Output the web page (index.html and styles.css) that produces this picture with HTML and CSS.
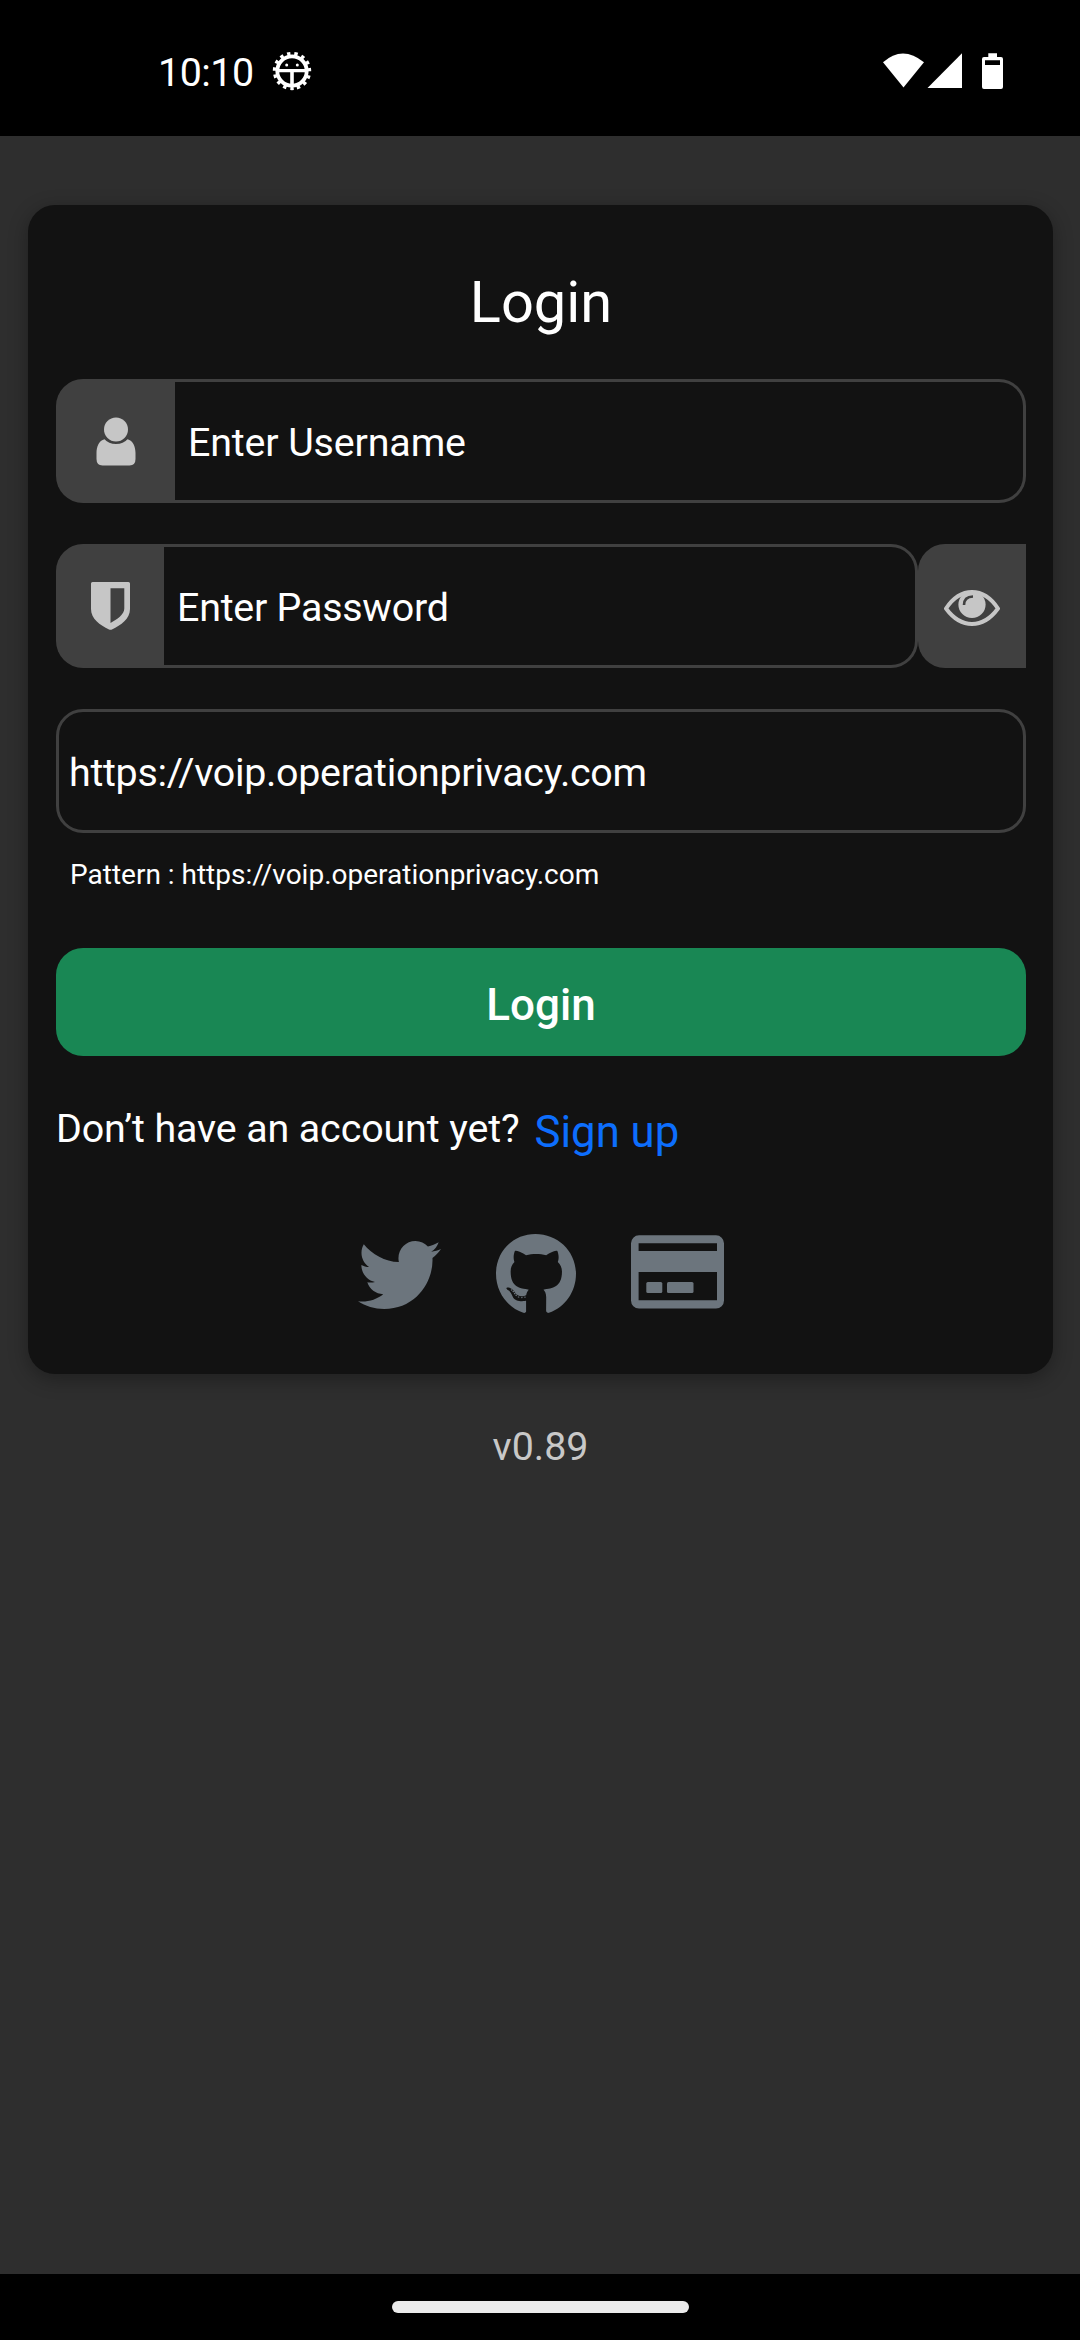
FILE: index.html
```html
<!DOCTYPE html>
<html lang="en">
<head>
<meta charset="utf-8">
<title>Login</title>
<link rel="stylesheet" href="styles.css">
</head>
<body>
<header class="status">
  <span class="clock">10:10</span>
  <svg class="bug" width="40" height="40" viewBox="-20 -20 40 40">
    <circle r="17" fill="none" stroke="#fff" stroke-width="4.400" stroke-dasharray="3.300 3.820" transform="rotate(84.500)"/>
    <circle r="14.700" fill="none" stroke="#fff" stroke-width="3.800"/>
    <path d="M-14-2H14V1.300H1.800V15H-1.800V1.300H-14z" fill="#fff"/>
    <circle cx="-5.300" cy="-6" r="1.500" fill="#fff"/><circle cx="5.300" cy="-6" r="1.500" fill="#fff"/>
  </svg>
  <svg class="signals" width="122" height="38" viewBox="882 52 122 38" fill="#fff">
    <path d="M883 62.300Q902.500 44.600 924 62.300L903.500 87.500z"/>
    <path d="M962 53.300V88H927.500z"/>
    <path fill-rule="evenodd" d="M988.300 53.300H997V57H1001a2 2 0 0 1 2 2V87a2 2 0 0 1-2 2H984a2 2 0 0 1-2-2V59a2 2 0 0 1 2-2h4.300zM985 60.300V65h15V60.300z"/>
  </svg>
</header>
<main class="page">
  <section class="card">
    <h1 class="title">Login</h1>
    <div class="field">
      <span class="addon addon-user">
        <svg width="40" height="49" viewBox="0 0 40 49" fill="#c6c6c6"><circle cx="20" cy="12.500" r="12"/><path d="M8.500 22.300Q12.500 27 20 27T31.500 22.300C37 23.500 39.500 30 39.500 36V42Q39.500 48.500 33.500 48.500H6.500Q.5 48.500 .5 42V36C.5 30 3 23.500 8.500 22.300z"/></svg>
      </span>
      <span class="input username">Enter Username</span>
    </div>
    <div class="field">
      <span class="addon addon-lock">
        <svg width="39" height="48" viewBox="0 0 39 48"><path fill="#c6c6c6" fill-rule="evenodd" d="M1.500 0H37.500Q39 0 39 1.500V27C39 37 30 43 21 47.500Q19.500 48.200 18 47.500C9 43 0 37 0 27V1.500Q0 0 1.500 0zM19.500 6.200V41C26 37.500 33.300 32.500 33.300 26.500V6.200z"/></svg>
      </span>
      <span class="input password">Enter Password</span>
      <span class="addon addon-eye">
        <svg width="56" height="36" viewBox="0 0 56 36"><path d="M2 18.500C9 8 17 2 28 2S47 8 54 18.500C47 28 39 34 28 34S9 28 2 18.500z" fill="none" stroke="#c6c6c6" stroke-width="4" stroke-linejoin="round"/><circle cx="28" cy="14.500" r="13.600" fill="#c6c6c6"/><path d="M20 15Q20 6.800 29 6.500" fill="none" stroke="#404040" stroke-width="2.600"/></svg>
      </span>
    </div>
    <div class="field"><span class="input url">https://voip.operationprivacy.com</span></div>
    <p class="hint">Pattern : https://voip.operationprivacy.com</p>
    <button class="submit">Login</button>
    <p class="signup"><span class="question">Don’t have an account yet?</span><a class="link">Sign up</a></p>
    <div class="social">
      <svg class="twitter" width="83" height="68" viewBox="0 48 512 416" preserveAspectRatio="none"><path d="M459.370 151.716c.325 4.548.325 9.097.325 13.645 0 138.720-105.583 298.558-298.558 298.558-59.452 0-114.680-17.219-161.137-47.106 8.447.974 16.568 1.299 25.340 1.299 49.055 0 94.213-16.568 130.274-44.832-46.132-.975-84.792-31.188-98.112-72.772 6.498.974 12.995 1.624 19.818 1.624 9.421 0 18.843-1.300 27.614-3.573-48.081-9.747-84.143-51.980-84.143-102.985v-1.299c13.969 7.797 30.214 12.670 47.431 13.319-28.264-18.843-46.781-51.005-46.781-87.391 0-19.492 5.197-37.360 14.294-52.954 51.655 63.675 129.300 105.258 216.365 109.807-1.624-7.797-2.599-15.918-2.599-24.040 0-57.828 46.782-104.934 104.934-104.934 30.213 0 57.502 12.670 76.670 33.137 23.715-4.548 46.456-13.320 66.599-25.340-7.798 24.366-24.366 44.833-46.132 57.827 21.117-2.273 41.584-8.122 60.426-16.243-14.292 20.791-32.161 39.308-52.628 54.253z"/></svg>
      <svg class="github" width="80" height="79" viewBox="0 8 496 484" preserveAspectRatio="none"><path d="M165.900 397.400c0 2-2.300 3.600-5.200 3.600-3.300.3-5.600-1.300-5.600-3.600 0-2 2.300-3.600 5.200-3.600 3-.3 5.600 1.300 5.600 3.600zm-31.100-4.500c-.7 2 1.300 4.300 4.300 4.900 2.600 1 5.600 0 6.200-2s-1.300-4.300-4.300-5.200c-2.600-.7-5.500.3-6.200 2.300zm44.200-1.700c-2.900.7-4.900 2.600-4.600 4.900.3 2 2.900 3.300 5.900 2.600 2.900-.7 4.900-2.600 4.600-4.600-.3-1.900-3-3.200-5.900-2.900zM244.800 8C106.100 8 0 113.300 0 252c0 110.900 69.800 205.800 169.500 239.200 12.800 2.300 17.300-5.600 17.300-12.100 0-6.200-.3-40.400-.3-61.400 0 0-70 15-84.700-29.800 0 0-11.400-29.100-27.800-36.600 0 0-22.900-15.700 1.600-15.400 0 0 24.900 2 38.600 25.800 21.900 38.600 58.600 27.500 72.900 20.900 2.300-16 8.800-27.100 16-33.700-55.900-6.200-112.300-14.300-112.300-110.500 0-27.500 7.600-41.300 23.600-58.900-2.600-6.500-11.100-33.300 2.600-67.900 20.900-6.500 69 27 69 27 20-5.600 41.500-8.500 62.800-8.500s42.800 2.900 62.800 8.500c0 0 48.100-33.600 69-27 13.700 34.700 5.200 61.400 2.600 67.900 16 17.700 25.800 31.500 25.800 58.900 0 96.500-58.900 104.200-114.800 110.500 9.200 7.900 17 22.900 17 46.400 0 33.700-.3 75.400-.3 83.600 0 6.500 4.600 14.400 17.300 12.100C428.200 457.800 496 362.900 496 252 496 113.300 383.500 8 244.800 8z"/><g><circle cx="97" cy="351" r="5"/><circle cx="107" cy="361" r="5"/><circle cx="116" cy="373" r="5"/><circle cx="125" cy="384" r="5"/></g></svg>
      <svg class="payment" width="93" height="74" viewBox="0 0 93 74"><path fill-rule="evenodd" d="M8 .3H85a8 8 0 0 1 8 8V65.500a8 8 0 0 1-8 8H8a8 8 0 0 1-8-8V8.300a8 8 0 0 1 8-8zM7.600 8.300V16H86V8.300zM7.600 37V65.300H86V37z"/><rect x="15.300" y="47" width="16" height="11" rx="1.500"/><rect x="36" y="47" width="26.500" height="11" rx="1.500"/></svg>
    </div>
  </section>
  <p class="version">v0.89</p>
</main>
<footer class="nav"><span class="pill"></span></footer>
</body>
</html>
```
FILE: styles.css
```css
* { box-sizing: border-box; }
body {
  margin: 0;
  width: 1080px;
  height: 2340px;
  display: flex;
  flex-direction: column;
  background: #2e2e2e;
  color: #fff;
  font: 39.4px/46px Roboto, sans-serif;
}
h1, p { margin: 0; font-weight: 400; }
svg { display: block; flex: none; }
.status {
  height: 136px;
  background: #000;
  display: flex;
  align-items: flex-start;
  padding: 50px 76px 0 158px;
}
.clock { width: 113.5px; letter-spacing: -.5px; }
.bug { margin-top: 1px; }
.signals { margin: 2px 0 0 auto; }
.page { flex: 1; padding: 69px 27px 0 28px; }
.card {
  height: 1169px;
  padding: 63px 27px 0 28px;
  background: #121212;
  border-radius: 27px;
  box-shadow: 0 5px 20px rgba(0, 0, 0, .32);
}
.title {
  height: 111px;
  font-size: 57.75px;
  line-height: 68px;
  text-align: center;
}
.field { display: flex; height: 124px; margin-bottom: 41px; }
.addon {
  display: flex;
  align-items: center;
  justify-content: center;
  background: #404040;
  border-radius: 27px 0 0 27px;
}
.addon-user { width: 119px; }
.addon-lock { width: 108px; padding-bottom: 1px; }
.addon-eye { width: 108px; padding-top: 4px; }
.input {
  flex: 1;
  padding: 38px 14px 0 13px;
  border: 3px solid #404040;
  border-left-width: 0;
  border-radius: 0 27px 27px 0;
  white-space: nowrap;
}
.username { letter-spacing: -.14px; }
.password { letter-spacing: -.24px; }
.url { padding-left: 10px; border-left-width: 3px; border-radius: 27px; letter-spacing: -.3px; }
.hint { height: 99px; margin-top: -25px; padding-left: 14px; font-size: 28px; line-height: 52px; }
.submit {
  display: block;
  width: 100%;
  height: 108px;
  padding: 5px 0 0;
  border: 0;
  border-radius: 27px;
  background: #198754;
  color: #fff;
  font: 500 44px/52px Roboto, sans-serif;
}
.signup { display: flex; height: 178px; padding-top: 50px; }
.question { letter-spacing: -.11px; }
.link { margin: 3px 0 0 15px; color: #0d6efd; font-size: 43.7px; }
.social { display: flex; align-items: center; justify-content: center; gap: 55px; fill: #6c757d; }
.twitter { margin-top: 3px; }
.payment { margin-top: -4px; }
.version { margin-top: 50px; text-align: center; color: #c8c8c8; }
.nav { height: 66px; background: #000; display: flex; justify-content: center; padding-top: 27px; }
.pill { width: 297px; height: 12px; border-radius: 6px; background: #ebebeb; }
```
